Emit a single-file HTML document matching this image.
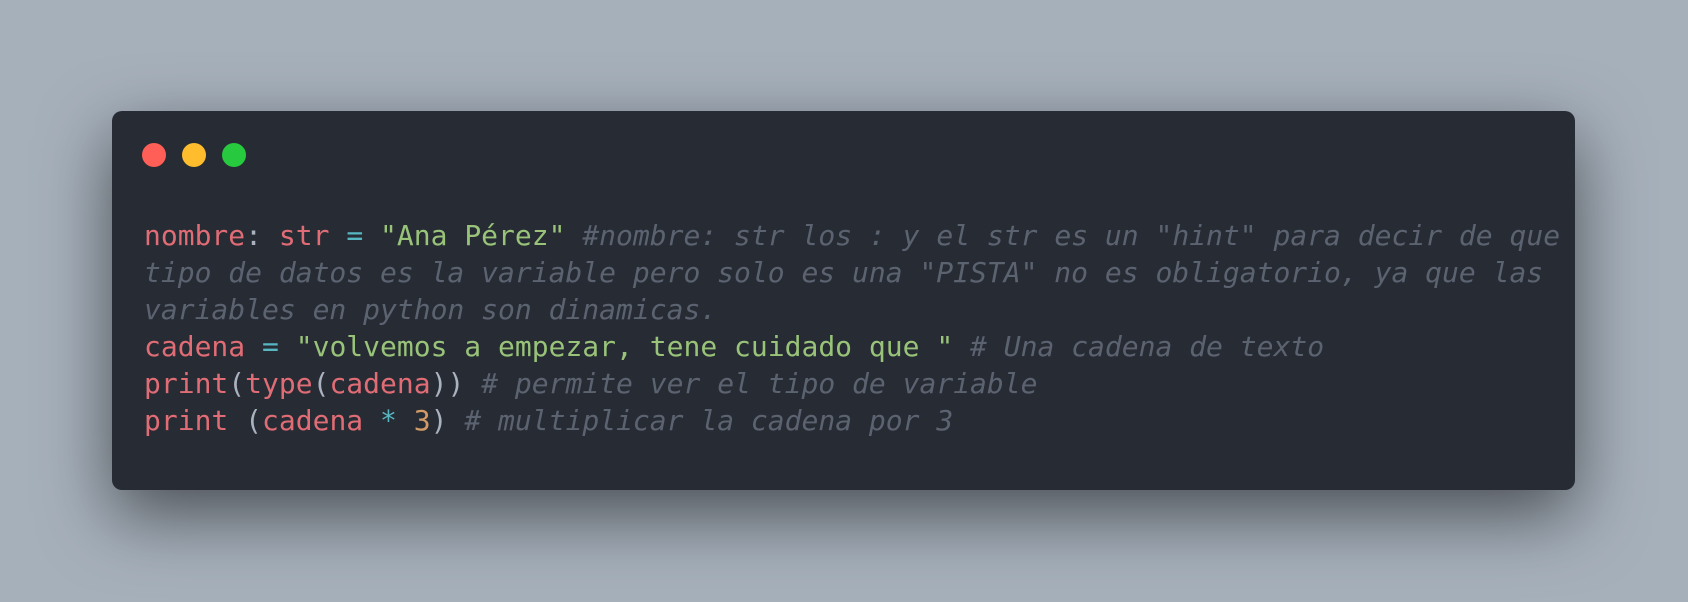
<!DOCTYPE html>
<html><head><meta charset="utf-8"><style>
html,body{margin:0;padding:0}
body{width:1688px;height:602px;background:#a6b0bb;position:relative;overflow:hidden}
.card{position:absolute;left:112px;top:111px;width:1463px;height:379px;background:#272b34;border-radius:10px;box-shadow:0 25px 70px rgba(0,0,0,0.55)}
.dot{position:absolute;top:143px;width:24px;height:24px;border-radius:50%}
pre{position:absolute;left:144px;top:217px;margin:0;font-family:"DejaVu Sans Mono","Liberation Mono",monospace;font-size:28px;line-height:37px;color:#abb2bf}
.r{color:#e06c75}.g{color:#98c379}.c{color:#56b6c2}.o{color:#d19a66}.m{color:#5c6370;font-style:italic}
</style></head><body>
<div class="card"></div>
<div class="dot" style="left:142px;background:#ff5f56"></div>
<div class="dot" style="left:182px;background:#ffbd2e"></div>
<div class="dot" style="left:222px;background:#27c93f"></div>
<pre><span class="r">nombre</span>: <span class="r">str</span> <span class="c">=</span> <span class="g">"Ana Pérez"</span> <span class="m">#nombre: str los : y el str es un "hint" para decir de que
tipo de datos es la variable pero solo es una "PISTA" no es obligatorio, ya que las
variables en python son dinamicas.</span>
<span class="r">cadena</span> <span class="c">=</span> <span class="g">"volvemos a empezar, tene cuidado que "</span> <span class="m"># Una cadena de texto</span>
<span class="r">print</span>(<span class="r">type</span>(<span class="r">cadena</span>)) <span class="m"># permite ver el tipo de variable</span>
<span class="r">print</span> (<span class="r">cadena</span> <span class="c">*</span> <span class="o">3</span>) <span class="m"># multiplicar la cadena por 3</span></pre>
</body></html>
